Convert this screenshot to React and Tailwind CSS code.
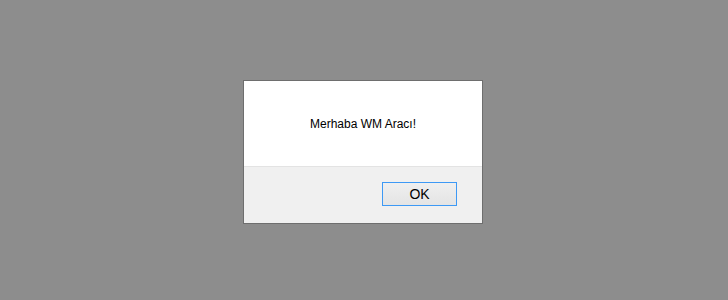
export default function App() {
  return (
    <div
      className="w-[728px] h-[300px] bg-[#8d8d8d] pt-[80px] pl-[243px]"
      style={{ fontFamily: '"Liberation Sans", Arial, sans-serif' }}
    >
      <div className="w-[240px] h-[144px] border border-[#6e6e6e] bg-white flex flex-col">
        <div className="h-[85px] flex items-center justify-center text-[12px] text-black pt-[1px]">
          Merhaba WM Aracı!
        </div>
        <div className="flex-1 bg-[#f0f0f0] border-t border-[#e3e3e3] flex justify-end items-start pt-[15px] pr-[25px]">
          <button className="w-[75px] h-[24px] border border-[#3d99f5] bg-gradient-to-b from-[#efefef] to-[#e4e4e4] text-[14px] text-black leading-none">
            OK
          </button>
        </div>
      </div>
    </div>
  );
}
